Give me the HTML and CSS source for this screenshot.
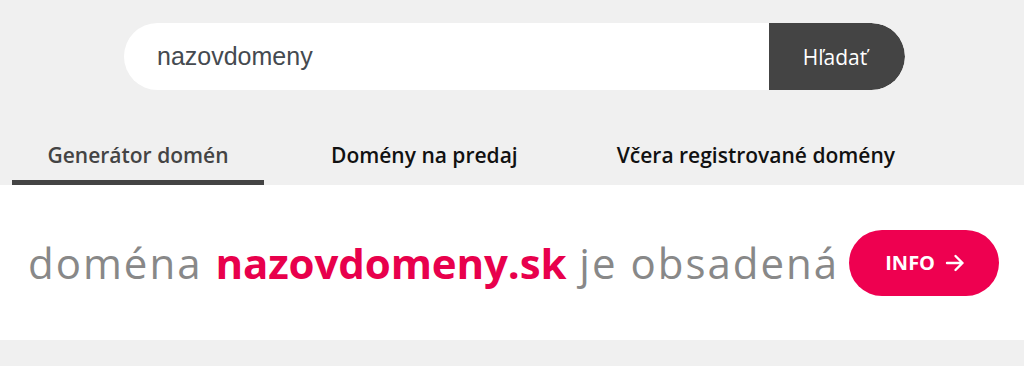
FILE: index.html
```html
<!DOCTYPE html>
<html lang="sk">
<head>
<meta charset="utf-8">
<title>Generátor domén</title>
<link rel="stylesheet" href="styles.css">
</head>
<body>
<div class="search">
  <div class="search-box">
    <div class="search-input">nazovdomeny</div>
    <button class="search-btn">Hľadať</button>
  </div>
</div>
<nav class="tabs">
  <a class="tab tab-active">Generátor domén</a>
  <a class="tab tab-2">Domény na predaj</a>
  <a class="tab tab-3">Včera registrované domény</a>
</nav>
<section class="result">
  <h1 class="headline">doména <strong>nazovdomeny.sk</strong> je obsadená</h1>
  <a class="info-btn">INFO
    <svg class="arrow" width="20" height="18" viewBox="0 0 20 18"><path d="M2 9H17.5M10.5 2L17.5 9L10.5 16" fill="none" stroke="#fff" stroke-width="2.4" stroke-linecap="round" stroke-linejoin="round"/></svg>
  </a>
</section>
</body>
</html>
```
FILE: styles.css
```css
* { box-sizing: border-box; }
html, body { margin: 0; padding: 0; }
body {
  background: #f0f0f0;
  font-family: "Open Sans", "Noto Sans", sans-serif;
  width: 1024px;
  height: 366px;
  overflow: hidden;
}
.search {
  padding: 23px 0 0 124px;
}
.search-box {
  display: flex;
  width: 781px;
  height: 67px;
  border-radius: 34px;
  overflow: hidden;
  background: #fff;
}
.search-input {
  flex: 1;
  display: flex;
  align-items: center;
  padding-left: 33px;
  font-family: "Liberation Sans", Arial, sans-serif;
  font-size: 25px;
  color: #454a50;
}
.search-btn {
  width: 136px;
  border: 0;
  background: #444444;
  color: #fff;
  font-family: "Open Sans", sans-serif;
  font-size: 21px;
  padding: 0 4px 0 0;
  border-radius: 0 34px 34px 0;
}
.tabs {
  display: flex;
  padding: 38px 0 0 12px;
}
.tab {
  display: block;
  font-size: 21px;
  font-weight: 600;
  color: #111;
  height: 57px;
  line-height: 54px;
  text-align: center;
}
.tab-active {
  width: 252px;
  color: #444;
  border-bottom: 5px solid #444;
}
.tab-2 { margin-left: 67px; }
.tab-3 { margin-left: 99px; }
.result {
  background: #fff;
  height: 155px;
  display: flex;
  align-items: center;
  padding: 0 0 0 28px;
}
.headline {
  margin: 0;
  font-size: 42px;
  font-weight: 400;
  color: #888;
  letter-spacing: 2px;
  white-space: nowrap;
}
.headline strong {
  color: #e8004c;
  font-weight: 700;
  letter-spacing: -0.1px;
}
.info-btn {
  margin-left: 10px;
  width: 150px;
  height: 66px;
  border-radius: 33px;
  background: #ee0050;
  color: #fff;
  font-weight: 700;
  font-size: 20px;
  display: flex;
  align-items: center;
  justify-content: center;
  gap: 10px;
  padding-left: 2px;
}
.arrow { display: block; }
```
